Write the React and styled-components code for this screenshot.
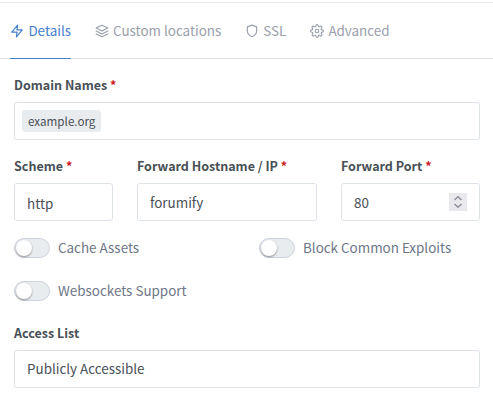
import React from "react";
import styled, { createGlobalStyle } from "styled-components";
import { FiZap, FiLayers, FiShield, FiSettings } from "react-icons/fi";

const GlobalStyle = createGlobalStyle`
  * { box-sizing: border-box; }
  body {
    margin: 0;
    background: #fff;
    color: #495057;
    font-family: "Noto Sans CJK SC", "Noto Sans", sans-serif;
    font-size: 13.43px;
  }
`;

const Panel = styled.main`
  width: 493px;
  height: 415px;
  padding-top: 2px;
  overflow: hidden;
`;

const Tabs = styled.nav`
  display: flex;
  gap: 23.6px;
  height: 57px;
  padding-left: 10px;
  border-top: 1px solid #e9ecef;
  border-bottom: 1px solid #dee2e6;
`;

const Tab = styled.a`
  display: flex;
  align-items: center;
  height: 56px;
  padding-bottom: 1px;
  border-bottom: 1px solid ${(p) => (p.$active ? "#467fcf" : "transparent")};
  color: ${(p) => (p.$active ? "#467fcf" : "#9aa0ac")};
  line-height: 24px;
  white-space: nowrap;
  svg {
    width: 14px;
    height: 14px;
    margin: 1px 4.4px 0 0;
    flex: none;
  }
`;

const Form = styled.form`
  padding: 15px 13px 0 14px;
`;

const Columns = styled.div`
  display: grid;
  grid-template-columns: 99px 180px 139px;
  column-gap: 24px;
  margin-top: 15px;
`;

const Label = styled.label`
  display: block;
  height: 21px;
  margin-bottom: 7px;
  font-size: 12.53px;
  font-weight: 700;
  line-height: 21px;
  white-space: nowrap;
`;

const Required = styled.span`
  color: #cd201f;
`;

const Control = styled.div`
  display: flex;
  align-items: center;
  height: 38px;
  padding: ${(p) => (p.$tags ? "0 7px" : "0 12px")};
  padding-top: ${(p) => (p.$select ? "2px" : "0")};
  padding-bottom: ${(p) => (p.$raised ? "2px" : "0")};
  border: 1px solid #dee2e9;
  border-radius: 3px;
  line-height: 24px;
`;

const Tag = styled.span`
  height: 22px;
  padding: 0 6px;
  border-radius: 3px;
  background: #e9ecef;
  font-size: 11.65px;
  line-height: 21px;
`;

const Spinner = styled.span`
  display: flex;
  width: 18px;
  height: 18px;
  margin-left: auto;
  background: #e9e9ed;
`;

const Switches = styled.div`
  display: grid;
  grid-template-columns: 245px 1fr;
  row-gap: 19px;
  margin-top: 15px;
`;

const SwitchRow = styled.label`
  display: flex;
  align-items: center;
  height: 24px;
  color: #6e7687;
  line-height: 22px;
  white-space: nowrap;
`;

const SwitchText = styled.span`
  height: 24px;
`;

const Track = styled.span`
  width: 36px;
  height: 20px;
  margin-right: 8px;
  padding: 1px;
  border: 1px solid #ced4df;
  border-radius: 10px;
  background: #e9ecef;
`;

const Knob = styled.span`
  display: block;
  width: 16px;
  height: 16px;
  border-radius: 50%;
  background: #fff;
  box-shadow: 0 1px 2px rgba(0, 0, 0, 0.4);
`;

const AccessField = styled.div`
  margin-top: 19px;
`;

const tabs = [
  { name: "Details", Icon: FiZap, active: true },
  { name: "Custom locations", Icon: FiLayers },
  { name: "SSL", Icon: FiShield },
  { name: "Advanced", Icon: FiSettings },
];

function Field({ label, required, children, ...control }) {
  return (
    <div>
      <Label>
        {label} {required && <Required>*</Required>}
      </Label>
      <Control {...control}>{children}</Control>
    </div>
  );
}

function Switch({ children }) {
  return (
    <SwitchRow>
      <Track>
        <Knob />
      </Track>
      <SwitchText>{children}</SwitchText>
    </SwitchRow>
  );
}

export default function App() {
  return (
    <Panel>
      <GlobalStyle />
      <Tabs>
        {tabs.map(({ name, Icon, active }) => (
          <Tab key={name} $active={active}>
            <Icon />
            {name}
          </Tab>
        ))}
      </Tabs>
      <Form>
        <Field label="Domain Names" required $tags>
          <Tag>example.org</Tag>
        </Field>
        <Columns>
          <Field label="Scheme" required $select>http</Field>
          <Field label="Forward Hostname / IP" required>forumify</Field>
          <Field label="Forward Port" required>
            80
            <Spinner>
              <svg width="18" height="18" fill="none" stroke="#8f8f9d" strokeWidth="1.5">
                <path d="M5.5 7 9 3.8 12.5 7M5.5 11 9 14.2 12.5 11" />
              </svg>
            </Spinner>
          </Field>
        </Columns>
        <Switches>
          <Switch>Cache Assets</Switch>
          <Switch>Block Common Exploits</Switch>
          <Switch>Websockets Support</Switch>
        </Switches>
        <AccessField>
          <Field label="Access List" $raised>Publicly Accessible</Field>
        </AccessField>
      </Form>
    </Panel>
  );
}
